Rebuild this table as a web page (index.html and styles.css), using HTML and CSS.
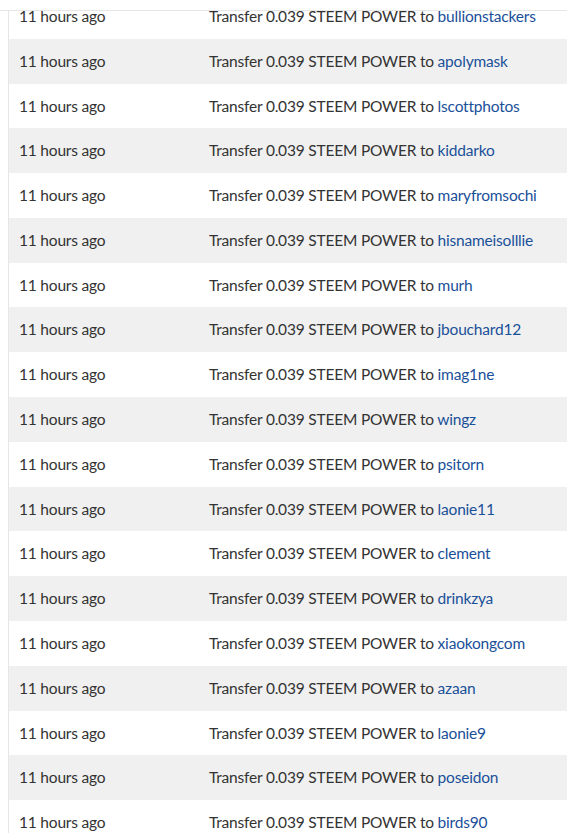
FILE: index.html
```html
<!DOCTYPE html>
<html>
<head>
<meta charset="utf-8">
<link rel="stylesheet" href="styles.css">
</head>
<body>
<div class="viewport">
<table class="history">
<tbody>
<tr><td class="when">11 hours ago</td><td>Transfer 0.039 STEEM POWER to <a href="#">bullionstackers</a></td></tr>
<tr><td class="when">11 hours ago</td><td>Transfer 0.039 STEEM POWER to <a href="#">apolymask</a></td></tr>
<tr><td class="when">11 hours ago</td><td>Transfer 0.039 STEEM POWER to <a href="#">lscottphotos</a></td></tr>
<tr><td class="when">11 hours ago</td><td>Transfer 0.039 STEEM POWER to <a href="#">kiddarko</a></td></tr>
<tr><td class="when">11 hours ago</td><td>Transfer 0.039 STEEM POWER to <a href="#">maryfromsochi</a></td></tr>
<tr><td class="when">11 hours ago</td><td>Transfer 0.039 STEEM POWER to <a href="#">hisnameisolllie</a></td></tr>
<tr><td class="when">11 hours ago</td><td>Transfer 0.039 STEEM POWER to <a href="#">murh</a></td></tr>
<tr><td class="when">11 hours ago</td><td>Transfer 0.039 STEEM POWER to <a href="#">jbouchard12</a></td></tr>
<tr><td class="when">11 hours ago</td><td>Transfer 0.039 STEEM POWER to <a href="#">imag1ne</a></td></tr>
<tr><td class="when">11 hours ago</td><td>Transfer 0.039 STEEM POWER to <a href="#">wingz</a></td></tr>
<tr><td class="when">11 hours ago</td><td>Transfer 0.039 STEEM POWER to <a href="#">psitorn</a></td></tr>
<tr><td class="when">11 hours ago</td><td>Transfer 0.039 STEEM POWER to <a href="#">laonie11</a></td></tr>
<tr><td class="when">11 hours ago</td><td>Transfer 0.039 STEEM POWER to <a href="#">clement</a></td></tr>
<tr><td class="when">11 hours ago</td><td>Transfer 0.039 STEEM POWER to <a href="#">drinkzya</a></td></tr>
<tr><td class="when">11 hours ago</td><td>Transfer 0.039 STEEM POWER to <a href="#">xiaokongcom</a></td></tr>
<tr><td class="when">11 hours ago</td><td>Transfer 0.039 STEEM POWER to <a href="#">azaan</a></td></tr>
<tr><td class="when">11 hours ago</td><td>Transfer 0.039 STEEM POWER to <a href="#">laonie9</a></td></tr>
<tr><td class="when">11 hours ago</td><td>Transfer 0.039 STEEM POWER to <a href="#">poseidon</a></td></tr>
<tr><td class="when">11 hours ago</td><td>Transfer 0.039 STEEM POWER to <a href="#">birds90</a></td></tr>
<tr><td class="when">11 hours ago</td><td>Transfer 0.039 STEEM POWER to <a href="#">steemit</a></td></tr>
</tbody>
</table>
</div>
</body>
</html>
```

FILE: styles.css
```css
html, body {
  margin: 0;
  padding: 0;
  background: #fff;
}
body {
  font-family: Lato, "Liberation Sans", sans-serif;
  font-size: 15.5px;
  letter-spacing: -0.2px;
  color: #333;
}
.viewport {
  margin-top: 10px;
  border-top: 1px solid #e6e6e6;
  height: 822px;
  overflow: hidden;
}
.history {
  margin-top: -17px;
  margin-left: 8px;
  width: 559px;
  border-collapse: collapse;
  border-left: 1px solid #e6e6e6;
}
.history td {
  padding: 10px 10px 9.2px;
  line-height: 25.6px;
  white-space: nowrap;
}
.history td.when {
  width: 170px;
}
.history tr:nth-child(even) td {
  background: #f0f0f0;
}
.history a {
  color: #1a5099;
  text-decoration: none;
}
```
